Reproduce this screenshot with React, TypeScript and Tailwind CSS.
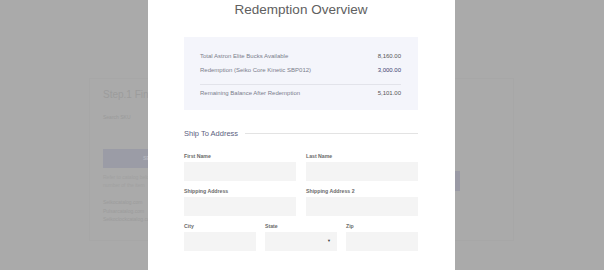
const Field = ({ label, select }: { label: string; select?: boolean }) => (
  <div className="flex flex-col">
    <span className="text-[5.2px] leading-[6px] font-bold text-[#6a6a6a]">{label}</span>
    <div className="mt-[3px] h-[19px] bg-[#f4f4f4] flex items-center justify-end pr-[6px]">
      {select && <span className="text-[4px] leading-none text-[#444]">▼</span>}
    </div>
  </div>
);

const Row = ({ label, value, valueClass }: { label: string; value: string; valueClass: string }) => (
  <div className="flex justify-between text-[6px] leading-[8px]">
    <span className="text-[#7a7d8c]">{label}</span>
    <span className={valueClass}>{value}</span>
  </div>
);

const App = () => {
  return (
    <div
      className="relative w-[604px] h-[270px] overflow-hidden bg-[#aaaaaa]"
      style={{ fontFamily: '"Liberation Sans", Arial, sans-serif' }}
    >
      {/* page behind the overlay */}
      <div className="ml-[89px] mt-[78px] w-[425px] h-[163px] border border-[#a7a7a7] pl-[13px] pt-[10px]">
        <h2 className="text-[10px] leading-[12px] text-[#9c9c9c]">Step.1 Find your item</h2>
        <p className="mt-[13px] text-[5px] leading-[6px] text-[#9a9a9a]">Search SKU</p>
        <div className="mt-[29px] w-[120px] h-[19px] bg-[#9b9ca6] flex items-center pl-[40px]">
          <span className="text-[5px] font-bold text-[#b4b5bd]">SEARCH</span>
        </div>
        <p className="mt-[5px] text-[5px] leading-[8px] text-[#a1a1a1]">
          Refer to catalog below for
          <br />
          number of the item
        </p>
        <div className="mt-[9px] text-[5px] leading-[8.6px] text-[#9c9c9c]">
          <p>Seikocatalog.com</p>
          <p>Pulsarcatalog.com</p>
          <p>Seikoclockcatalog.com</p>
        </div>
      </div>

      {/* scroll thumb */}
      <div className="absolute left-[455px] top-[171px] w-[5px] h-[20px] bg-[#9a9aa5]" />

      {/* modal */}
      <div className="absolute left-[148px] top-0 w-[307px] h-[270px] bg-white pl-[36px] pr-[37px] pt-[2px]">
        <h1 className="text-center text-[13.5px] leading-[16px] text-[#606060]">Redemption Overview</h1>

        <div className="mt-[19px] bg-[#f4f5fb] pl-[16px] pr-[17px] pt-[15px] pb-[13px]">
          <Row label="Total Astron Elite Bucks Available" value="8,160.00" valueClass="text-[#555]" />
          <div className="mt-[5.6px]">
            <Row label="Redemption (Seiko Core Kinetic SBP012)" value="3,000.00" valueClass="text-[#3c4270]" />
          </div>
          <div className="mt-[10px] border-t border-[#e2e3ea]" />
          <div className="mt-[4px]">
            <Row label="Remaining Balance After Redemption" value="5,101.00" valueClass="text-[#555]" />
          </div>
        </div>

        <div className="mt-[19px] flex items-center">
          <span className="text-[7.5px] leading-[10px] text-[#5d6280]">Ship To Address</span>
          <div className="ml-[7px] flex-1 border-t border-[#e3e3e3]" />
        </div>

        <div className="mt-[14px] grid grid-cols-2 gap-x-[10px] gap-y-[7px]">
          <Field label="First Name" />
          <Field label="Last Name" />
          <Field label="Shipping Address" />
          <Field label="Shipping Address 2" />
        </div>
        <div className="mt-[7px] grid grid-cols-3 gap-x-[9px]">
          <Field label="City" />
          <Field label="State" select />
          <Field label="Zip" />
        </div>
      </div>
    </div>
  );
};

export default App;
